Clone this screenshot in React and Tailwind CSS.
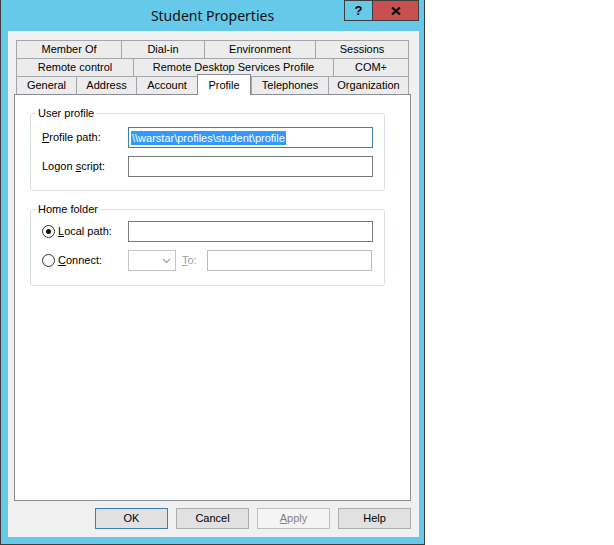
import React from 'react';

const rows = [
  [['Member Of', 105], ['Dial-in', 83], ['Environment', 111], ['Sessions', 94]],
  [['Remote control', 117], ['Remote Desktop Services Profile', 200], ['COM+', 76]],
  [['General', 60], ['Address', 60], ['Account', 61], ['Profile', 54], ['Telephones', 77], ['Organization', 81]],
];

const widths = {
  105: 'w-[105px]', 83: 'w-[83px]', 111: 'w-[111px]', 94: 'w-[94px]',
  117: 'w-[117px]', 200: 'w-[200px]', 76: 'w-[76px]',
  60: 'w-[60px]', 61: 'w-[61px]', 54: 'w-[54px]', 77: 'w-[77px]', 81: 'w-[81px]',
};

function Tab({ label, w, last }) {
  if (label === 'Profile') {
    return (
      <div
        className={`relative z-10 -mt-[2px] h-[21px] self-start ${widths[w]} bg-white border-x border-t border-[#898c95] flex justify-center pt-[2px]`}
      >
        {label}
      </div>
    );
  }
  return (
    <div
      className={`${widths[w]} h-[18px] bg-[#ececec] border-t border-l ${last ? 'border-r' : ''} border-[#a3a5ab] flex items-center justify-center`}
    >
      {label}
    </div>
  );
}

function Radio({ checked }) {
  return (
    <div className="w-[13px] h-[13px] rounded-full border border-[#333] bg-white flex items-center justify-center mr-[3px]">
      {checked && <div className="w-[5px] h-[5px] rounded-full bg-[#111]" />}
    </div>
  );
}

function Button({ children, def, disabled }) {
  return (
    <div
      className={`w-[73px] h-[21px] flex items-center justify-center border ${
        def
          ? 'border-[#3c7fb1] bg-[#e1e1e1]'
          : disabled
          ? 'border-[#bfbfbf] bg-[#f4f4f4] text-[#838383]'
          : 'border-[#adadad] bg-[#e1e1e1]'
      }`}
    >
      {children}
    </div>
  );
}

export default function App() {
  return (
    <div className="flex min-h-[545px] bg-white font-['Liberation_Sans',Arial,sans-serif] text-[11px] text-black">
      <div className="w-[425px] h-[545px] flex flex-col bg-[#66c9ea] border-x border-b border-[#3d3d3d]">
        {/* title bar */}
        <div className="h-[31px] grid grid-cols-[1fr_auto_1fr] px-[5px]">
          <div />
          <div className="self-center font-['Noto_Sans',sans-serif] text-[14px] leading-[18px] text-[#111] pt-[1px]">
            Student Properties
          </div>
          <div className="flex justify-end items-start">
            <div className="w-[29px] h-[21px] border border-[#3d3d3d] flex items-center justify-center font-bold text-[13px]">
              ?
            </div>
            <div className="w-[46px] h-[21px] border border-l-0 border-[#3d3d3d] bg-[#c75050] flex items-center justify-center">
              <svg width="10" height="8" viewBox="0 0 10 8">
                <path d="M1 0.5 L9 7.5 M9 0.5 L1 7.5" stroke="#111" strokeWidth="2.2" />
              </svg>
            </div>
          </div>
        </div>

        {/* client */}
        <div className="flex-1 ml-[7px] mr-[5px] mb-[7px] bg-[#f0f0f0] flex flex-col pt-[9px] pl-[6px] pr-[8px] pb-[8px]">
          <div className="ml-[2px]">
            {rows.map((row, i) => (
              <div key={i} className="flex h-[18px]">
                {row.map(([label, w], j) => (
                  <Tab key={label} label={label} w={w} last={j === row.length - 1} />
                ))}
              </div>
            ))}
          </div>

          <div className="h-[407px] bg-white border border-[#898c95] pl-[15px]">
            <fieldset className="mt-[12px] w-[355px] border border-[#d5dfe5] rounded-[3px] pl-[11px] pt-[7px] pb-[13px]">
              <legend className="ml-[-6px] px-[2px] leading-[13px]">User profile</legend>
              <div className="flex items-center h-[21px]">
                <div className="w-[86px]">
                  <span className="underline">P</span>rofile path:
                </div>
                <div className="w-[245px] h-[21px] border border-[#3c7fb1] bg-white flex items-center pl-[2px]">
                  <span className="bg-[#3399ff] text-white leading-[14px] px-[1px]">
                    \\warstar\profiles\student\profile
                  </span>
                </div>
              </div>
              <div className="flex items-center h-[21px] mt-[8px]">
                <div className="w-[86px]">
                  Logon <span className="underline">s</span>cript:
                </div>
                <div className="w-[245px] h-[21px] border border-[#7a7a7a] bg-white" />
              </div>
            </fieldset>

            <fieldset className="mt-[12px] w-[355px] border border-[#d5dfe5] rounded-[3px] pl-[11px] pt-[5px] pb-[14px]">
              <legend className="ml-[-6px] px-[2px] leading-[13px]">Home folder</legend>
              <div className="flex items-center h-[21px]">
                <div className="w-[86px] flex items-center">
                  <Radio checked />
                  <span>
                    <span className="underline">L</span>ocal path:
                  </span>
                </div>
                <div className="w-[245px] h-[21px] border border-[#7a7a7a] bg-white" />
              </div>
              <div className="flex items-center h-[21px] mt-[8px]">
                <div className="w-[86px] flex items-center">
                  <Radio />
                  <span>
                    <span className="underline">C</span>onnect:
                  </span>
                </div>
                <div className="w-[48px] h-[21px] border border-[#c4c4c4] bg-white flex items-center justify-end pr-[4px]">
                  <svg width="9" height="6" viewBox="0 0 9 6">
                    <path d="M1 1 L4.5 4.5 L8 1" stroke="#a8a8a8" strokeWidth="1.4" fill="none" />
                  </svg>
                </div>
                <div className="w-[31px] pl-[6px] text-[#a0a0a0]">
                  <span className="underline">T</span>o:
                </div>
                <div className="w-[165px] h-[21px] border border-[#bcbcbc] bg-white" />
              </div>
            </fieldset>
          </div>

          <div className="mt-[7px] flex justify-end gap-[8px]">
            <Button def>OK</Button>
            <Button>Cancel</Button>
            <Button disabled>
              <span>
                <span className="underline">A</span>pply
              </span>
            </Button>
            <Button>Help</Button>
          </div>
        </div>
      </div>
    </div>
  );
}
